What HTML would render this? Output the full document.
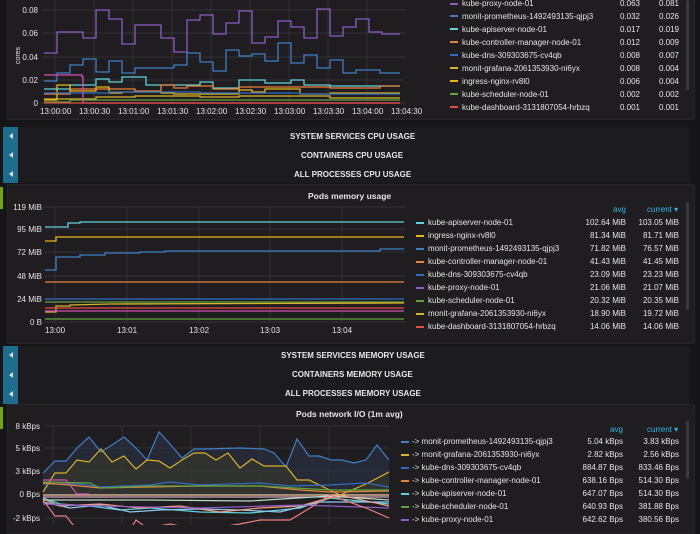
<!DOCTYPE html>
<html><head><meta charset="utf-8"><style>
*{margin:0;padding:0;box-sizing:border-box}
body{width:700px;height:525px;overflow:hidden;background:#161618;font-family:"Liberation Sans",Arial,sans-serif;color:#d8d9da;position:relative}
.a{position:absolute}
.panel{position:absolute;background:#1f1d20;border:1px solid #262628}
.t{position:absolute;font-size:8px;white-space:nowrap;color:#e4e4e4}
.r{text-align:right}
.b{font-weight:bold}
.sw{position:absolute;width:8px;height:2px}
.hdr{color:#33b5e5;font-size:8px;position:absolute}
.row{position:absolute;left:3px;width:687px;background:#1c1b1e}
.tab{position:absolute;left:3px;width:15px;background:#1f6d8c}
.rt{position:absolute;font-size:8px;font-weight:bold;color:#e8e8e8;white-space:nowrap}
.tri{position:absolute;left:9px;width:0;height:0;border-top:3px solid transparent;border-bottom:3px solid transparent;border-right:4px solid #ddd}
.sb{position:absolute;left:686px;width:3px;background:#3a3a3c;border-radius:2px}
</style></head><body>

<div class="panel" style="left:7px;top:-2px;width:688px;height:122px"></div>
<svg class="a" style="left:0;top:0" width="700" height="120">
<g stroke="#3a3a3c" stroke-width="0.7">
<line x1="41" y1="10" x2="405" y2="10"/><line x1="41" y1="33" x2="405" y2="33"/><line x1="41" y1="57" x2="405" y2="57"/><line x1="41" y1="80" x2="405" y2="80"/><line x1="41" y1="103" x2="405" y2="103"/>
<line x1="55" y1="0" x2="55" y2="103"/><line x1="94" y1="0" x2="94" y2="103"/><line x1="133" y1="0" x2="133" y2="103"/><line x1="172" y1="0" x2="172" y2="103"/><line x1="211" y1="0" x2="211" y2="103"/><line x1="250" y1="0" x2="250" y2="103"/><line x1="289" y1="0" x2="289" y2="103"/><line x1="328" y1="0" x2="328" y2="103"/><line x1="367" y1="0" x2="367" y2="103"/>
</g>
<g fill="none" stroke-width="1.3">
<polyline stroke="#8b5cc4" points="44,53 57,53 57,32 83,32 83,38 96,38 96,10 109,10 109,19 122,19 122,44 135,44 135,25 161,25 161,38 174,38 174,52 187,52 187,20 200,20 200,15 213,15 213,34 226,34 226,23 239,23 239,11 252,11 252,43 265,43 265,37 278,37 278,21 291,21 291,27 304,27 304,38 317,38 317,9 330,9 330,36 343,36 343,27 356,27 356,19 369,19 369,32 382,32 382,34 400,34"/>
<polyline stroke="#3f7fc8" points="44,81 57,81 57,73 70,73 70,65 83,65 83,59 96,59 96,72 109,72 109,61 122,61 122,73 135,73 135,68 174,68 174,65 187,65 187,53 200,53 200,62 213,62 213,71 226,71 226,50 239,50 239,56 252,56 252,54 265,54 265,61 278,61 278,43 291,43 291,63 304,63 304,55 317,55 317,68 330,68 330,60 343,60 343,73 356,73 356,70 380,70 380,73 400,73"/>
<polyline stroke="#5fd3db" points="44,89 70,89 70,85 96,85 96,79 109,79 109,82 122,82 122,77 146,77 146,85 200,85 200,82 213,82 213,88 239,88 239,80 265,80 265,83 291,83 291,80 304,80 304,85 330,85 330,86 400,86"/>
<polyline stroke="#e8833a" points="44,94 70,94 70,89 109,89 109,89 135,89 135,91 161,91 161,85 174,85 174,88 187,88 187,86 213,86 213,89 239,89 239,87 330,87 330,88 380,88 380,86 400,86"/>
<polyline stroke="#e5b818" points="44,100 57,100 57,85 70,85 70,91 96,91 96,87 109,87 109,93 122,93 122,92 161,92 161,93 174,93 174,94 239,94 239,90 252,90 252,92 265,92 265,89 300,89 300,94 330,94 330,93 400,93"/>
<polyline stroke="#d7b22a" points="44,99 96,99 96,97 135,97 135,96 200,96 200,97 239,97 239,96 330,96 330,98 400,98"/>
<polyline stroke="#2e6ec2" points="44,93 109,93 109,92 200,92 200,93 300,93 300,94 400,94"/>
<polyline stroke="#5fa33e" points="44,102 70,102 70,100 400,100"/>
<polyline stroke="#d04fb0" points="44,75 82,75 82,77 83,77 83,103 400,103"/>
<polyline stroke="#e24d42" points="44,103 400,103"/>
</g>
</svg>
<div class="t r" style="left:0;top:6px;width:38px">0.08</div>
<div class="t r" style="left:0;top:29px;width:38px">0.06</div>
<div class="t r" style="left:0;top:53px;width:38px">0.04</div>
<div class="t r" style="left:0;top:76px;width:38px">0.02</div>
<div class="t r" style="left:0;top:99px;width:38px">0</div>
<div class="t" style="left:10px;top:52px;transform:rotate(-90deg);font-size:7px">cores</div>
<div class="t" style="left:40px;top:107px">13:00:00</div><div class="t" style="left:79px;top:107px">13:00:30</div><div class="t" style="left:118px;top:107px">13:01:00</div><div class="t" style="left:157px;top:107px">13:01:30</div><div class="t" style="left:196px;top:107px">13:02:00</div><div class="t" style="left:235px;top:107px">13:02:30</div><div class="t" style="left:274px;top:107px">13:03:00</div><div class="t" style="left:313px;top:107px">13:03:30</div><div class="t" style="left:352px;top:107px">13:04:00</div><div class="t" style="left:391px;top:107px">13:04:30</div>
<div class="sb" style="top:0;height:90px"></div>

<div class="sw" style="left:450px;top:3px;background:#8b5cc4"></div><div class="t" style="left:462px;top:-1px">kube-proxy-node-01</div><div class="t r" style="left:600px;top:-1px;width:40px">0.063</div><div class="t r" style="left:640px;top:-1px;width:39px">0.081</div>
<div class="sw" style="left:450px;top:15px;background:#3f7fc8"></div><div class="t" style="left:462px;top:12px">monit-prometheus-1492493135-qjpj3</div><div class="t r" style="left:600px;top:12px;width:40px">0.032</div><div class="t r" style="left:640px;top:12px;width:39px">0.026</div>
<div class="sw" style="left:450px;top:28px;background:#5fd3db"></div><div class="t" style="left:462px;top:25px">kube-apiserver-node-01</div><div class="t r" style="left:600px;top:25px;width:40px">0.017</div><div class="t r" style="left:640px;top:25px;width:39px">0.019</div>
<div class="sw" style="left:450px;top:41px;background:#e8833a"></div><div class="t" style="left:462px;top:38px">kube-controller-manager-node-01</div><div class="t r" style="left:600px;top:38px;width:40px">0.012</div><div class="t r" style="left:640px;top:38px;width:39px">0.009</div>
<div class="sw" style="left:450px;top:54px;background:#2e6ec2"></div><div class="t" style="left:462px;top:51px">kube-dns-309303675-cv4qb</div><div class="t r" style="left:600px;top:51px;width:40px">0.008</div><div class="t r" style="left:640px;top:51px;width:39px">0.007</div>
<div class="sw" style="left:450px;top:67px;background:#d7b22a"></div><div class="t" style="left:462px;top:64px">monit-grafana-2061353930-ni6yx</div><div class="t r" style="left:600px;top:64px;width:40px">0.008</div><div class="t r" style="left:640px;top:64px;width:39px">0.004</div>
<div class="sw" style="left:450px;top:80px;background:#e5b818"></div><div class="t" style="left:462px;top:77px">ingress-nginx-rv8l0</div><div class="t r" style="left:600px;top:77px;width:40px">0.006</div><div class="t r" style="left:640px;top:77px;width:39px">0.004</div>
<div class="sw" style="left:450px;top:93px;background:#5fa33e"></div><div class="t" style="left:462px;top:90px">kube-scheduler-node-01</div><div class="t r" style="left:600px;top:90px;width:40px">0.002</div><div class="t r" style="left:640px;top:90px;width:39px">0.002</div>
<div class="sw" style="left:450px;top:106px;background:#e24d42"></div><div class="t" style="left:462px;top:103px">kube-dashboard-3131807054-hrbzq</div><div class="t r" style="left:600px;top:103px;width:40px">0.001</div><div class="t r" style="left:640px;top:103px;width:39px">0.001</div>

<div class="row" style="top:127px;height:56px"></div>
<div class="tab" style="top:127px;height:56px"></div>
<div class="tri" style="top:133px"></div><div class="tri" style="top:152px"></div><div class="tri" style="top:171px"></div>
<div class="rt" style="left:290px;top:132px">SYSTEM SERVICES CPU USAGE</div>
<div class="rt" style="left:301px;top:151px">CONTAINERS CPU USAGE</div>
<div class="rt" style="left:294px;top:170px">ALL PROCESSES CPU USAGE</div>

<div class="a" style="left:0;top:187px;width:3px;height:22px;background:#6ea70f"></div>
<div class="panel" style="left:7px;top:184px;width:688px;height:160px"></div>
<div class="t b" style="left:308px;top:191px;font-size:8.5px">Pods memory usage</div>
<svg class="a" style="left:0;top:180px" width="420" height="150">
<g stroke="#3a3a3c" stroke-width="0.7">
<line x1="44" y1="27" x2="405" y2="27"/><line x1="44" y1="49" x2="405" y2="49"/><line x1="44" y1="72" x2="405" y2="72"/><line x1="44" y1="96" x2="405" y2="96"/><line x1="44" y1="119" x2="405" y2="119"/><line x1="44" y1="142" x2="405" y2="142"/>
<line x1="55" y1="27" x2="55" y2="142"/><line x1="127" y1="27" x2="127" y2="142"/><line x1="199" y1="27" x2="199" y2="142"/><line x1="270" y1="27" x2="270" y2="142"/><line x1="342" y1="27" x2="342" y2="142"/>
</g>
<g fill="none" stroke-width="1.3">
<polyline stroke="#5fd3db" points="45,47 68,47 68,43 80,43 80,42 404,42"/>
<polyline stroke="#e5b818" points="45,61 56,61 56,57 404,57"/>
<polyline stroke="#3f7fc8" points="45,90 56,90 56,77 80,77 80,75 105,75 105,73 140,73 140,72 165,72 165,71 380,71 380,69 404,69"/>
<polyline stroke="#e8833a" points="45,102 404,102"/>
<polyline stroke="#2e6ec2" points="45,119 404,119"/>
<polyline stroke="#5fa33e" points="45,122 404,122"/>
<polyline stroke="#d7b22a" points="45,132 56,132 56,126 70,126 70,125 110,124 404,123"/>
<polyline stroke="#e24d42" points="45,128 404,128"/>
<polyline stroke="#d04fb0" points="45,131 404,131"/>
<polyline stroke="#5fa33e" points="45,139 404,139"/>
</g>
</svg>
<div class="t r" style="left:0;top:203px;width:42px">119 MiB</div>
<div class="t r" style="left:0;top:225px;width:42px">95 MiB</div>
<div class="t r" style="left:0;top:248px;width:42px">72 MiB</div>
<div class="t r" style="left:0;top:272px;width:42px">48 MiB</div>
<div class="t r" style="left:0;top:295px;width:42px">24 MiB</div>
<div class="t r" style="left:0;top:318px;width:42px">0 B</div>
<div class="t" style="left:45px;top:326px">13:00</div><div class="t" style="left:117px;top:326px">13:01</div><div class="t" style="left:189px;top:326px">13:02</div><div class="t" style="left:260px;top:326px">13:03</div><div class="t" style="left:332px;top:326px">13:04</div>
<div class="sb" style="top:202px;height:108px"></div>
<div class="hdr" style="left:613px;top:205px">avg</div>
<div class="hdr" style="left:647px;top:205px">current ▾</div>
<div class="sw" style="left:416px;top:222px;background:#5fd3db"></div><div class="t" style="left:428px;top:218px">kube-apiserver-node-01</div><div class="t r" style="left:580px;top:218px;width:46px">102.64 MiB</div><div class="t r" style="left:630px;top:218px;width:49px">103.05 MiB</div>
<div class="sw" style="left:416px;top:235px;background:#e5b818"></div><div class="t" style="left:428px;top:231px">ingress-nginx-rv8l0</div><div class="t r" style="left:580px;top:231px;width:46px">81.34 MiB</div><div class="t r" style="left:630px;top:231px;width:49px">81.71 MiB</div>
<div class="sw" style="left:416px;top:248px;background:#3f7fc8"></div><div class="t" style="left:428px;top:244px">monit-prometheus-1492493135-qjpj3</div><div class="t r" style="left:580px;top:244px;width:46px">71.82 MiB</div><div class="t r" style="left:630px;top:244px;width:49px">76.57 MiB</div>
<div class="sw" style="left:416px;top:261px;background:#e8833a"></div><div class="t" style="left:428px;top:257px">kube-controller-manager-node-01</div><div class="t r" style="left:580px;top:257px;width:46px">41.43 MiB</div><div class="t r" style="left:630px;top:257px;width:49px">41.45 MiB</div>
<div class="sw" style="left:416px;top:274px;background:#2e6ec2"></div><div class="t" style="left:428px;top:270px">kube-dns-309303675-cv4qb</div><div class="t r" style="left:580px;top:270px;width:46px">23.09 MiB</div><div class="t r" style="left:630px;top:270px;width:49px">23.23 MiB</div>
<div class="sw" style="left:416px;top:287px;background:#8b5cc4"></div><div class="t" style="left:428px;top:283px">kube-proxy-node-01</div><div class="t r" style="left:580px;top:283px;width:46px">21.06 MiB</div><div class="t r" style="left:630px;top:283px;width:49px">21.07 MiB</div>
<div class="sw" style="left:416px;top:300px;background:#5fa33e"></div><div class="t" style="left:428px;top:296px">kube-scheduler-node-01</div><div class="t r" style="left:580px;top:296px;width:46px">20.32 MiB</div><div class="t r" style="left:630px;top:296px;width:49px">20.35 MiB</div>
<div class="sw" style="left:416px;top:313px;background:#d7b22a"></div><div class="t" style="left:428px;top:309px">monit-grafana-2061353930-ni6yx</div><div class="t r" style="left:580px;top:309px;width:46px">18.90 MiB</div><div class="t r" style="left:630px;top:309px;width:49px">19.72 MiB</div>
<div class="sw" style="left:416px;top:326px;background:#e24d42"></div><div class="t" style="left:428px;top:322px">kube-dashboard-3131807054-hrbzq</div><div class="t r" style="left:580px;top:322px;width:46px">14.06 MiB</div><div class="t r" style="left:630px;top:322px;width:49px">14.06 MiB</div>

<div class="row" style="top:346px;height:58px"></div>
<div class="tab" style="top:346px;height:58px"></div>
<div class="tri" style="top:352px"></div><div class="tri" style="top:372px"></div><div class="tri" style="top:391px"></div>
<div class="rt" style="left:281px;top:351px">SYSTEM SERVICES MEMORY USAGE</div>
<div class="rt" style="left:292px;top:370px">CONTAINERS MEMORY USAGE</div>
<div class="rt" style="left:285px;top:389px">ALL PROCESSES MEMORY USAGE</div>

<div class="a" style="left:0;top:407px;width:3px;height:22px;background:#6ea70f"></div>
<div class="panel" style="left:7px;top:404px;width:688px;height:130px"></div>
<div class="t b" style="left:296px;top:409px;font-size:8.5px">Pods network I/O (1m avg)</div>
<svg class="a" style="left:0;top:420px" width="420" height="105">
<g stroke="#3a3a3c" stroke-width="0.7">
<line x1="44" y1="6" x2="390" y2="6"/><line x1="44" y1="28" x2="390" y2="28"/><line x1="44" y1="51" x2="390" y2="51"/><line x1="44" y1="74" x2="390" y2="74"/><line x1="44" y1="98" x2="390" y2="98"/>
<line x1="53" y1="6" x2="53" y2="105"/><line x1="122" y1="6" x2="122" y2="105"/><line x1="191" y1="6" x2="191" y2="105"/><line x1="260" y1="6" x2="260" y2="105"/><line x1="329" y1="6" x2="329" y2="105"/>
</g>
<polygon fill="#2a3446" opacity="0.6" points="43,53 55,41 66,41 77,28 89,17 101,32 112,25 124,17 136,28 147,40 159,12 170,24 182,38 194,29 205,29 240,28 264,29 274,33 286,47 297,19 309,36 319,36 331,40 342,40 354,43 366,40 377,25 389,40 389,74 43,74"/>
<polygon fill="#3a3a28" opacity="0.5" points="43,72 55,53 66,53 77,40 89,42 101,29 112,42 124,36 136,49 147,40 159,41 170,48 182,40 194,33 205,33 216,40 228,33 240,48 252,39 264,46 286,46 297,60 309,60 340,75 366,64 389,52 389,74 43,74"/>
<g fill="none" stroke-width="1.2">
<polyline stroke="#3f7fc8" points="43,53 55,41 66,41 77,28 89,17 101,32 112,25 124,17 136,28 147,40 159,12 170,24 182,38 194,29 205,29 240,28 264,29 274,33 286,47 297,19 309,36 319,36 331,40 342,40 354,43 366,40 377,25 389,40"/>
<polyline stroke="#d7b22a" points="43,72 55,53 66,53 77,40 89,42 101,29 112,42 124,36 136,49 147,40 159,41 170,48 182,40 194,33 205,33 216,40 228,33 240,48 252,39 264,46 286,46 297,60 309,60 340,75 366,64 389,52"/>
<polyline stroke="#2e6ec2" points="43,64 80,64 100,67 150,65 170,62 200,65 260,63 290,66 330,65 366,63 389,67"/>
<polyline stroke="#e8833a" points="43,63 70,65 100,68 150,67 200,66 260,66 300,70 330,72 389,71"/>
<polyline stroke="#5fa33e" points="43,62 90,63 100,68 150,66 260,66 330,70 389,70"/>
<polyline stroke="#f2c6a0" points="43,75 389,75"/>
<polyline stroke="#d7a8b8" points="43,77 389,77"/>
<polyline stroke="#b8dcc8" points="43,80 150,80 250,81 330,76 389,80"/>
<polyline stroke="#5fd3db" points="43,78 60,84 90,86 120,90 150,88 200,92 250,93 300,88 330,78 389,84"/>
<polyline stroke="#8ec8f0" points="43,82 70,88 100,85 130,92 160,90 200,89 240,90 280,92 320,82 389,82"/>
<polyline stroke="#f4a080" points="43,79 60,86 100,84 140,88 180,86 220,92 260,88 300,86 340,75 389,86"/>
<polyline stroke="#8b5cc4" points="43,84 100,86 200,88 300,85 389,88"/>
<polyline stroke="#e88080" points="43,80 55,96 66,96 77,110 130,110 136,100 147,108 170,104 200,110 240,104 260,100 290,100 310,88 330,75 366,88 389,98"/>
<polyline stroke="#d04fb0" points="43,60 66,60 77,74 89,74"/>
</g>
</svg>
<div class="t r" style="left:0;top:422px;width:40px">8 kBps</div>
<div class="t r" style="left:0;top:444px;width:40px">5 kBps</div>
<div class="t r" style="left:0;top:467px;width:40px">3 kBps</div>
<div class="t r" style="left:0;top:490px;width:40px">0 Bps</div>
<div class="t r" style="left:0;top:514px;width:40px">-2 kBps</div>
<div class="sb" style="top:421px;height:58px"></div>
<div class="hdr" style="left:610px;top:425px">avg</div><div class="hdr" style="left:647px;top:425px">current ▾</div>
<div class="sw" style="left:401px;top:441px;background:#3f7fc8"></div><div class="t" style="left:412px;top:437px">-&gt; monit-prometheus-1492493135-qjpj3</div><div class="t r" style="left:570px;top:437px;width:53px">5.04 kBps</div><div class="t r" style="left:625px;top:437px;width:54px">3.83 kBps</div>
<div class="sw" style="left:401px;top:454px;background:#d7b22a"></div><div class="t" style="left:412px;top:450px">-&gt; monit-grafana-2061353930-ni6yx</div><div class="t r" style="left:570px;top:450px;width:53px">2.82 kBps</div><div class="t r" style="left:625px;top:450px;width:54px">2.56 kBps</div>
<div class="sw" style="left:401px;top:467px;background:#2e6ec2"></div><div class="t" style="left:412px;top:463px">-&gt; kube-dns-309303675-cv4qb</div><div class="t r" style="left:570px;top:463px;width:53px">884.87 Bps</div><div class="t r" style="left:625px;top:463px;width:54px">833.46 Bps</div>
<div class="sw" style="left:401px;top:480px;background:#e8833a"></div><div class="t" style="left:412px;top:476px">-&gt; kube-controller-manager-node-01</div><div class="t r" style="left:570px;top:476px;width:53px">638.16 Bps</div><div class="t r" style="left:625px;top:476px;width:54px">514.30 Bps</div>
<div class="sw" style="left:401px;top:493px;background:#5fd3db"></div><div class="t" style="left:412px;top:489px">-&gt; kube-apiserver-node-01</div><div class="t r" style="left:570px;top:489px;width:53px">647.07 Bps</div><div class="t r" style="left:625px;top:489px;width:54px">514.30 Bps</div>
<div class="sw" style="left:401px;top:506px;background:#5fa33e"></div><div class="t" style="left:412px;top:502px">-&gt; kube-scheduler-node-01</div><div class="t r" style="left:570px;top:502px;width:53px">640.93 Bps</div><div class="t r" style="left:625px;top:502px;width:54px">381.88 Bps</div>
<div class="sw" style="left:401px;top:519px;background:#8b5cc4"></div><div class="t" style="left:412px;top:515px">-&gt; kube-proxy-node-01</div><div class="t r" style="left:570px;top:515px;width:53px">642.62 Bps</div><div class="t r" style="left:625px;top:515px;width:54px">380.56 Bps</div>
</body></html>
